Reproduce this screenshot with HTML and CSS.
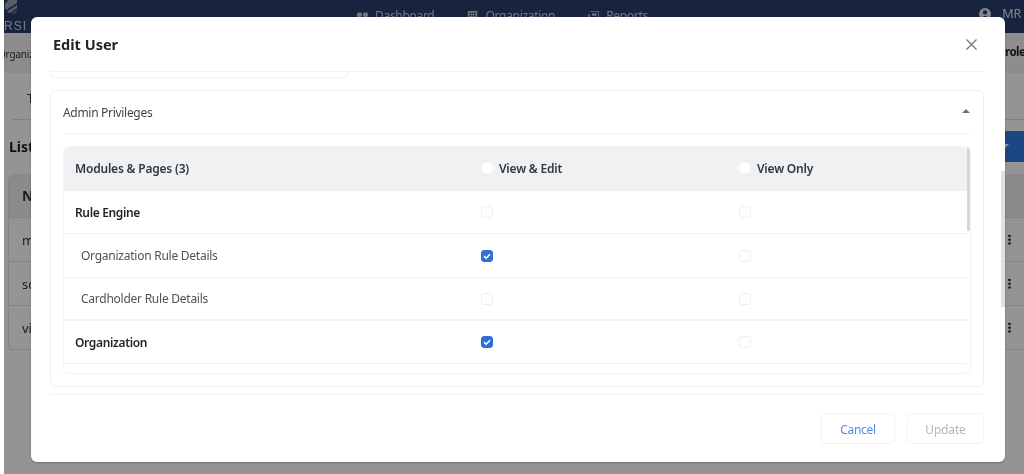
FILE: index.html
```html
<!DOCTYPE html>
<html lang="en">
<head>
<meta charset="utf-8">
<title>Edit User</title>
<link rel="stylesheet" href="styles.css">
</head>
<body>
<div class="app">
  <header class="topbar">
    <div class="brand">
      <svg class="brand-mark" width="14" height="14" viewBox="0 0 14 14"><path d="M7-4 13 0v3L2 10 1 8V4zM13 5v3l-7 5-3-1.500zM13 10v1l-3 2.500H8z" fill="#9aa3b2"/></svg>
      <span class="brand-name">RSI</span>
    </div>
    <nav class="nav">
      <span class="nav-item"><svg class="nav-icon" viewBox="0 0 14 14"><rect x="0" y="2" width="6.300" height="5.500" rx="2"/><rect x="7.700" y="2" width="6.300" height="5.500" rx="2"/><rect x="0" y="9" width="6.300" height="5" rx="1.500"/><rect x="7.700" y="9" width="6.300" height="5" rx="1.500"/></svg>Dashboard</span>
      <span class="nav-item"><svg class="nav-icon" viewBox="0 0 14 14"><path d="M1 0h12v14H1zM3 2v2h2V2zm3 0v2h2V2zm3 0v2h2V2zM3 5v2h2V5zm3 0v2h2V5zm3 0v2h2V5zM3 8v2h2V8zm3 0v2h2V8zm3 0v2h2V8z" fill-rule="evenodd"/></svg>Organization</span>
      <span class="nav-item"><svg class="nav-icon" viewBox="0 0 14 14"><path d="M3 1h10v11H2V4H0v8q0 2 2 2h10q2 0 2-2V0H3z"/><path d="M5 3h6v3H5z"/></svg>Reports</span>
    </nav>
    <div class="user"><svg class="user-icon" viewBox="0 0 14 14"><circle cx="7" cy="7" r="7"/><circle cx="7" cy="5.200" r="2.500" fill="#2a3f6a"/><path d="M2.500 12q4.500-6 9 0z" fill="#2a3f6a"/></svg>MR</div>
  </header>
  <div class="crumbs"><span class="crumb-start">Organization</span><span class="crumb-end">role</span></div>
  <div class="tabs"><span>T</span></div>
  <div class="list-head"><b>List</b><span class="add-btn"><i class="add-caret"></i></span></div>
  <div class="bg-table">
    <div class="bg-row bg-row-head"><b>N</b></div>
    <div class="bg-row"><span>m</span><i class="dots"></i></div>
    <div class="bg-row"><span>sc</span><i class="dots"></i></div>
    <div class="bg-row"><span>vi</span><i class="dots"></i></div>
  </div>
</div>

<div class="overlay"></div>

<section class="modal">
  <div class="modal-scroll"></div>
  <header class="modal-head">
    <h1>Edit User</h1>
    <svg class="close" width="11" height="11" viewBox="0 0 11 11"><path d="M.5.500l10 10M10.500.500l-10 10" stroke="#6b7280" stroke-width="1.200" fill="none"/></svg>
  </header>
  <div class="modal-body">
    <div class="prev-card"></div>
    <div class="panel">
      <div class="panel-head"><span>Admin Privileges</span><i class="caret"></i></div>
      <div class="grid-wrap">
        <div class="grid-scroll"></div>
        <div class="row row-head">
          <div class="c-name">Modules &amp; Pages (3)</div>
          <div class="c-a"><i class="cb cb-head"></i>View &amp; Edit</div>
          <div class="c-b"><i class="cb cb-head"></i>View Only</div>
        </div>
        <div class="row row-group">
          <div class="c-name">Rule Engine</div>
          <div class="c-a"><i class="cb"></i></div>
          <div class="c-b"><i class="cb"></i></div>
        </div>
        <div class="row row-tall">
          <div class="c-name c-sub">Organization Rule Details</div>
          <div class="c-a"><i class="cb cb-on"><svg viewBox="0 0 12 12" width="12" height="12"><path d="M3 6.200l2.100 2L9 4.200" fill="none" stroke="#fff" stroke-width="1.600"/></svg></i></div>
          <div class="c-b"><i class="cb"></i></div>
        </div>
        <div class="row row-thick">
          <div class="c-name c-sub">Cardholder Rule Details</div>
          <div class="c-a"><i class="cb"></i></div>
          <div class="c-b"><i class="cb"></i></div>
        </div>
        <div class="row row-group">
          <div class="c-name">Organization</div>
          <div class="c-a"><i class="cb cb-on"><svg viewBox="0 0 12 12" width="12" height="12"><path d="M3 6.200l2.100 2L9 4.200" fill="none" stroke="#fff" stroke-width="1.600"/></svg></i></div>
          <div class="c-b"><i class="cb"></i></div>
        </div>
      </div>
    </div>
  </div>
  <footer class="modal-foot">
    <button class="btn btn-cancel" type="button">Cancel</button>
    <button class="btn btn-update" type="button" disabled>Update</button>
  </footer>
</section>
</body>
</html>
```
FILE: styles.css
```css
* { box-sizing: border-box; }
html, body { margin: 0; height: 100%; overflow: hidden; }
body { font-family: "Noto Sans", "Open Sans", sans-serif; background: #fff; position: relative; width: 1024px; height: 474px; filter: blur(.35px); }

.app { margin-left: 4px; height: 474px; background: #fff; font-size: 12px; color: #333; position: relative; overflow: hidden; }
.topbar { height: 33px; background: #2a3f6a; display: flex; align-items: flex-start; color: #fff; }
.brand { width: 27px; flex: none; display: flex; flex-direction: column; }
.brand-mark { display: block; }
.brand-name { font-family: "Liberation Sans", sans-serif; font-size: 12px; line-height: 9px; margin-top: 8px; letter-spacing: 1px; color: #cfd5e0; }
.nav { display: flex; gap: 33px; margin-left: 326px; padding-top: 6px; font-size: 12px; letter-spacing: -.3px; color: #c6cbd6; }
.nav-item { display: flex; align-items: center; gap: 7px; line-height: 20px; }
.nav-icon { width: 11px; height: 11px; fill: #c6cbd6; }
.user { margin-left: auto; display: flex; align-items: center; gap: 11px; padding: 5px 3px 0 0; font-size: 12.500px; letter-spacing: -.2px; color: #dfe3ea; }
.user-icon { width: 12px; height: 12px; fill: #e6e8ee; }

.crumbs { height: 40px; display: flex; justify-content: space-between; align-items: center; background: #f2f2f2; font-size: 10px; }
.crumb-start { margin-left: -6px; padding-top: 2px; letter-spacing: -.2px; }
.crumb-end { width: 215px; height: 24px; padding-left: 196px; white-space: nowrap; background: #f7f7f7; font-size: 11.500px; font-weight: 700; letter-spacing: -.5px; color: #222; line-height: 22px; }
.tabs { height: 47px; margin-left: 8px; padding-top: 16px; padding-left: 15px; border-bottom: 1px solid #dcdcdc; font-size: 13px; }
.list-head { height: 31px; margin-top: 11px; padding-left: 5px; display: flex; justify-content: space-between; align-items: center; font-size: 14px; color: #222; }
.add-btn { width: 60px; height: 31px; background: #2f7be0; display: flex; align-items: center; padding-left: 35px; }
.add-caret { width: 0; height: 0; border: 5px solid transparent; border-bottom: 0; border-top: 5px solid #fff; }
.bg-table { margin: 12px 0 0 4px; border-left: 1px solid #e6e6e6; border-radius: 6px; font-size: 13px; }
.bg-row { height: 44px; border-bottom: 1px solid #e2e2e2; padding: 0 13px 0 13px; display: flex; align-items: center; justify-content: space-between; }
.bg-row-head { background: #eeeeef; font-size: 14px; border-radius: 6px 0 0 0; }
.dots { width: 3px; height: 11px; background: radial-gradient(circle, #444 1.200px, transparent 1.500px) 0 0 / 3px 3.800px; }

.overlay { position: absolute; inset: 0 0 0 4px; background: rgba(0, 0, 0, .42); }

.modal { position: absolute; left: 31px; top: 17px; width: 974px; height: 445px; background: #fff; border-radius: 6px; box-shadow: 0 1px 2px rgba(0,0,0,.25); padding: 0 21px 0 19px; display: flex; flex-direction: column; }
.modal-scroll { position: absolute; right: 0; top: 154px; width: 4px; height: 136px; background: #dfe0e4; }
.modal-head { height: 55px; flex: none; display: flex; align-items: center; justify-content: space-between; padding: 0 7px 0 3px; border-bottom: 1px solid #f3f4f6; }
.modal-head h1 { margin: 0; font-size: 14.500px; font-weight: 700; color: #212529; }
.modal-body { flex: none; height: 323px; border-bottom: 1px solid #f1f3f6; }
.prev-card { width: 299px; height: 6px; border: 1px solid #f1f1f3; border-top: 0; border-radius: 0 0 6px 6px; }
.panel { margin-top: 12px; height: 297px; border: 1px solid #eef0f2; border-radius: 6px; padding: 0 12px; }
.panel-head { height: 43px; display: flex; justify-content: space-between; align-items: center; font-size: 12px; letter-spacing: -.3px; color: #3f454e; border-bottom: 1px solid #f3f4f6; padding-right: 1px; }
.caret { width: 0; height: 0; border: 4px solid transparent; border-top: 0; border-bottom: 4px solid #6b7280; margin-top: -2px; }
.grid-wrap { margin-top: 12px; height: 228px; overflow: hidden; border: 1px solid #f1f2f4; border-top: 0; border-radius: 6px; position: relative; padding-right: 3px; }
.grid-scroll { position: absolute; right: 0; top: 0; width: 3px; height: 85px; background: #d5d7dc; border-radius: 2px; }
.row { height: 43px; display: grid; grid-template-columns: 417px 258px 1fr; align-items: center; border-bottom: 1px solid #f1f2f4; font-size: 12px; letter-spacing: -.25px; color: #4d525a; }
.row-head { height: 45px; background: #f0f1f3; font-weight: 600; letter-spacing: -.2px; color: #33383f; border-radius: 6px 6px 0 0; }
.row-group { color: #1f2328; font-weight: 600; letter-spacing: -.35px; }
.row-tall { height: 44px; }
.row-thick { border-bottom-width: 2px; }
.c-name { padding-left: 11px; }
.c-sub { padding-left: 17px; }
.c-a, .c-b { display: flex; align-items: center; gap: 6px; }
.cb { width: 12px; height: 12px; border: 1px solid #eeeff1; border-radius: 3px; background: #fff; display: block; flex: none; }
.cb-head { border-color: #f3f3f5; }
.cb-on { background: #2f6fdb; border-color: #2f6fdb; position: relative; }
.cb-on svg { position: absolute; left: -1px; top: -1px; display: block; }

.modal-foot { flex: 1; display: flex; justify-content: flex-end; gap: 12px; padding-top: 18px; }
.btn { height: 31px; padding: 2px 0 0; border: 1px solid #f0f2f5; border-radius: 5px; background: #fff; font: 12px "Noto Sans", "Open Sans", sans-serif; }
.btn-cancel { width: 74px; color: #4f8ae0; letter-spacing: -.3px; }
.btn-update { width: 77px; color: #b2b6bd; letter-spacing: -.15px; }
```
